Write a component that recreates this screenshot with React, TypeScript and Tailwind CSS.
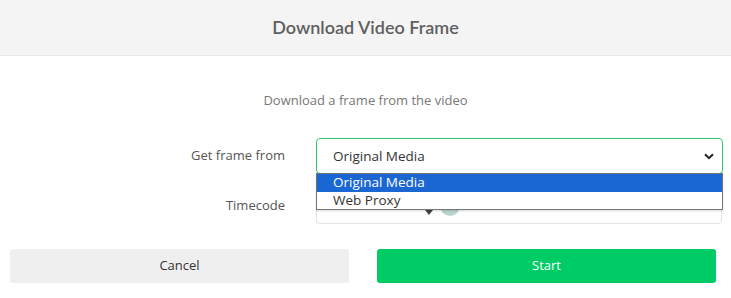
import React from "react";

export default function App() {
  return (
    <div className="w-[731px] h-[298px] bg-white overflow-hidden" style={{ fontFamily: '"Open Sans", "Noto Sans", sans-serif' }}>
      <div className="h-[56px] bg-[#f4f4f4] border-b border-[#e6e6e6] flex items-center justify-center">
        <span className="text-[18px] font-semibold text-[#5f5f5f]" style={{ fontFamily: 'Lato, sans-serif' }}>Download Video Frame</span>
      </div>
      <div className="pt-[35px] text-center text-[13px] text-[#777] leading-[18px]">Download a frame from the video</div>
      <div className="mt-[29px] flex flex-col gap-[14px]">
        <div className="flex items-center">
          <div className="w-[285px] text-right text-[13px] text-[#555]">Get frame from</div>
          <div className="ml-[31px] relative w-[407px]">
            <div className="h-[36px] border border-[#2ecc71] rounded-[4px] flex items-center pl-[16px] pr-[8px] justify-between text-[13.5px] text-[#333]">
              <span>Original Media</span>
              <svg width="10" height="7" viewBox="0 0 10 7"><path d="M1 1.2 L5 5.2 L9 1.2" stroke="#222" strokeWidth="2" fill="none" /></svg>
            </div>
            <div className="absolute left-0 top-[35px] w-[407px] bg-white border border-[#767676] z-10 text-[13.5px] leading-[17.5px] shadow-[0_1px_2px_rgba(0,0,0,0.15)]">
              <div className="bg-[#1a66d2] text-white pl-[16px]">Original Media</div>
              <div className="text-[#333] pl-[16px]">Web Proxy</div>
            </div>
          </div>
        </div>
        <div className="flex items-center">
          <div className="w-[285px] text-right text-[13px] text-[#555]">Timecode</div>
          <div className="ml-[31px] w-[406px] h-[36px] border border-[#e3e3e3] rounded-[4px] flex items-center pl-[108px]">
            <svg width="8" height="5" viewBox="0 0 8 5" className="mt-[12px]"><path d="M0 0 L8 0 L4 5 Z" fill="#444" /></svg>
            <div className="ml-[7px] w-[20px] h-[20px] rounded-full bg-[#b9d3cf]" />
          </div>
        </div>
      </div>
      <div className="mt-[25px] flex px-[10px] gap-[28px]">
        <button className="w-[339px] h-[34px] bg-[#efefef] rounded-[3px] text-[13px] text-[#333]">Cancel</button>
        <button className="w-[339px] h-[34px] bg-[#00cc66] rounded-[3px] text-[13px] text-white">Start</button>
      </div>
    </div>
  );
}
